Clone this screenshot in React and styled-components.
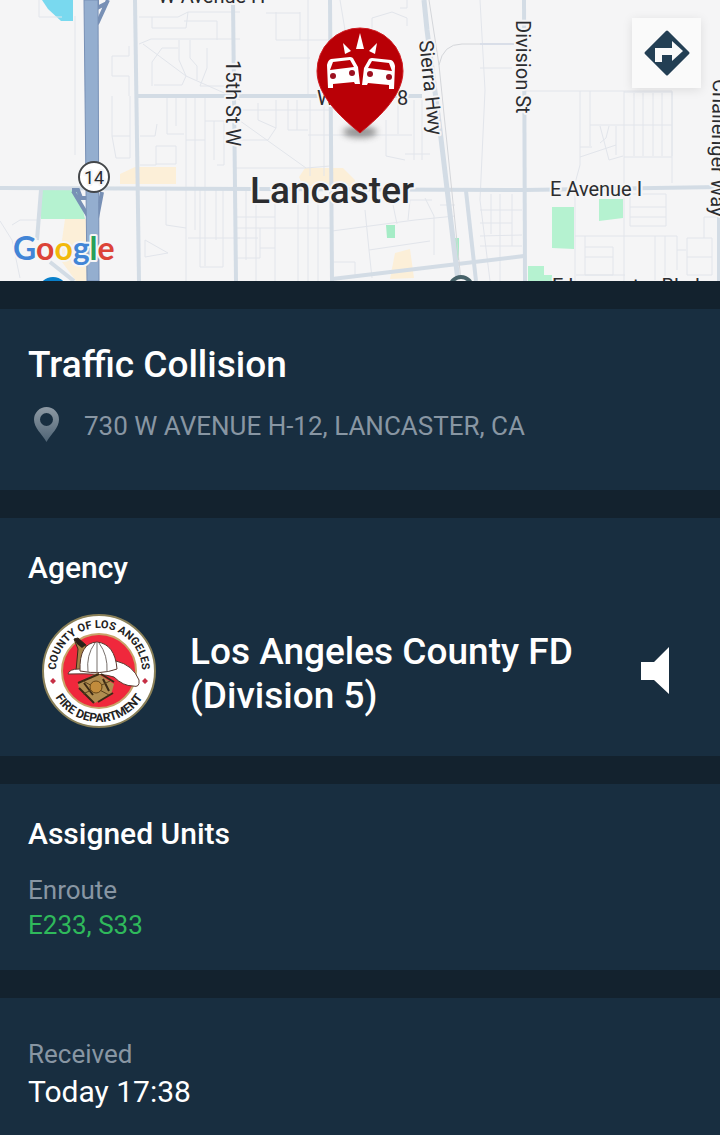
import React from 'react';
import styled, { createGlobalStyle } from 'styled-components';

const GlobalStyle = createGlobalStyle`
    body{
        margin: 0;
        background: #182e40;
        font-family: Roboto, "Liberation Sans", sans-serif;
    }
`
const Page = styled.main`
    display: flex;
    flex-direction: column;
    gap: 28px;
    background: #13222e;
    color: #fff;
`
const MapArea = styled.div`
    position: relative;
`
const MapSvg = styled.svg`
    display: block;
    width: 100%;
    height: auto;
    text{
        font-family: Roboto, "Liberation Sans", sans-serif;
        paint-order: stroke;
        stroke: #f5f5f6;
        stroke-width: 4px;
        stroke-linejoin: round;
        fill: #2b2c2f;
    }
`
const DirectionsButton = styled.button`
    position: absolute;
    top: 18px;
    right: 19px;
    display: flex;
    align-items: center;
    justify-content: center;
    width: 69px;
    height: 70px;
    padding: 0;
    border: 0;
    background: #fafafa;
    box-shadow: 0 2px 10px rgba(0, 0, 0, 0.1);
    cursor: pointer;
`
const Panel = styled.section`
    padding: ${(props) => props.$pad || '32px 28px 27px'};
    background: #182e40;
`
const Title = styled.h1`
    margin: 0 0 23px;
    font-size: 37px;
    font-weight: 500;
    line-height: 44px;
`
const Heading = styled.h2`
    margin: 0 0 ${(props) => props.$gap}px;
    font-size: 30px;
    font-weight: 500;
    line-height: 36px;
`
const Address = styled.div`
    display: flex;
    align-items: center;
    gap: 24px;
    height: 32px;
    padding-left: 5px;
    color: #8896a3;
    font-size: 26px;
    line-height: 32px;
    svg{
        flex: none;
        margin-bottom: 4px;
    }
`
const AgencyRow = styled.div`
    display: flex;
    align-items: center;
    padding: 0 22px 0 13px;
    svg{
        display: block;
        flex: none;
    }
`
const AgencyName = styled.div`
    flex: 1;
    padding: 5px 24px 0 33px;
    font-size: 37px;
    font-weight: 500;
    line-height: 44px;
`
const SoundButton = styled.button`
    padding: 0;
    border: 0;
    background: none;
    cursor: pointer;
`
const Label = styled.div`
    color: #8896a3;
    font-size: 26px;
    line-height: 35px;
`
const Units = styled.div`
    color: #2fb95b;
    font-size: 26px;
    line-height: 35px;
`
const Time = styled.div`
    font-size: 30px;
    line-height: 40px;
`

const minorRoads = [
    'M39 0V17H62M75 16V155M139 17H178L188 12H240M152 17V28H186L188 12M184 21H217V40',
    'M139 44L151 39H240M143 44L186 76L240 100M179 40V60L186 76M190 40V58L197 66V80M207 48V68L200 86H238',
    'M152 86V62L162 48H178M154 85H182L186 76M129 46V56H112V76H129V96',
    'M112 96V136L116 158H130V96M112 136H130M157 124L155 136H140M167 96V134H184M176 96V126M186 96V190',
    'M195 96V230M205 96V266M214 121V160M186 140H205M205 121H232M156 146V165H140M156 146H176V164H156M217 165H224V121',
    'M0 221L12 240L20 278M12 225L20 220H38M0 218M166 190V225L186 228M186 190V281M200 190V267H223V190M188 238H240M216 190V240',
    'M145 240L168 253L145 257M145 240V257',
    'M266 13H300M276 12V40H300M300 12V40H330M340 0L345 30M372 28V18L392 12L407 18V26M400 8H407V0M280 58H310',
    'M236 110H330M308 0V95M310 100V176M324 100V176M258 103V120L276 128V100M288 100V130H308M297 100V130',
    'M236 118L306 168M236 168H306L330 166V136M276 128L268 140H240M308 135H412M386 120V156L405 160M414 100V160M398 100V134M422 100V160M405 154H430',
    'M246 190V260M256 190V281M275 190V281M298 190V281M308 190V281M318 190V281M236 217H275M236 228H330M236 238L258 238M260 228V258H236M260 248H275',
    'M332 231L415 220L455 216M365 210L369 250L372 278M392 200L397 224M410 200L408 220M425 198L434 216V255M334 262H355V277M369 250L430 241M404 200H432M440 205H455',
    'M480 0L485 90L480 200L490 281M480 68H512M524 91H672M580 91V165L574 187M590 91V146M624 91V190M624 92H672V183',
    'M634 93V156M643 93V156M653 93V156M662 93V156M672 91V156M590 125H672M624 157H672M580 157L616 145M580 147H592M600 126L609 160L623 156M609 126L606 138L600 143M616 126V155',
    'M480 210H522M480 223H512M480 236L522 235M480 246H522M491 194V234M500 194V281M512 194V246M575 190V281M575 236H677V270M624 190V281',
    'M630 194H666V226H630ZM630 207H666M630 217H666M585 236V275H613V247H585M585 257H613M576 275H625M655 236V281M665 236V281M677 250H686M687 238H712V275H687ZM687 257H712M704 217V238M704 217H720',
];

const majorRoads = [
    'M135 0L139 281', 'M233 0L236 281', 'M330 0L332 281', 'M138 96H422', 'M0 188L524 190L720 187',
    'M524 0L525 281', 'M719 190V281', 'M332 279L524 256', 'M466 191L476 281',
];

const seal = {
    top: 'M15 58A43 43 0 0 1 101 58',
    bottom: 'M7 58A51 51 0 0 0 109 58',
};

const googleLetters = [
    ['G', '#4285d6'], ['o', '#dc4338'], ['o', '#f2b90c'], ['g', '#4285d6'], ['l', '#28a05a'], ['e', '#dc4338'],
];

function CityMap() {
    return (
        <MapSvg viewBox="0 0 720 281" role="img" aria-label="Map of Lancaster">
            <defs>
                <filter id="soft" x="-50%" y="-100%" width="200%" height="300%">
                    <feGaussianBlur stdDeviation="3" />
                </filter>
            </defs>
            <rect width="720" height="281" fill="#f5f5f6" />

            {/* parks, water and commercial areas */}
            <path d="M42 0H73V21H61L48 9Z" fill="#79d9ef" />
            <path d="M41 190H79L85 219H41Z" fill="#b5f2d0" />
            <path d="M552 207H574V249L552 248ZM599 199H623V218L599 221ZM528 266H544V275H552V281H528Z" fill="#b5f2d0" />
            <path d="M386 225H395V238H387ZM452 238H459V260H454Z" fill="#a5ecc6" />
            <path d="M120 174L135 167H176V184H120ZM65 219H87V281H76L62 262V240ZM299 177L305 168H343L355 180V186H303ZM395 253L410 249L414 278L390 279Z" fill="#fcefd8" />

            {minorRoads.map((d) => <path key={d} d={d} fill="none" stroke="#e2e5eb" strokeWidth="1" />)}
            {majorRoads.map((d) => <path key={d} d={d} fill="none" stroke="#d3dce5" strokeWidth="4" />)}
            <path d="M424 0L427 30L440 130L458 281" fill="none" stroke="#d3dce5" strokeWidth="5" />
            <path d="M429 0L439 65L461 281M439 65Q443 44 462 44H512" fill="none" stroke="#d4d6da" strokeWidth="1" />
            <path d="M480 44H514" stroke="#d9dee8" strokeWidth="2" />
            <path d="M41 190L37 240M50 262L74 281" fill="none" stroke="#d3dce5" strokeWidth="4" />

            {/* freeway */}
            <path d="M97 0V8L107 3M97 24L108 0M72 190H78L81 198H88M73 191L88 216M102 192L97 218" fill="none" stroke="#7890b5" strokeWidth="4" />
            <path d="M84 0H98L99 281H87Z" fill="#94aecf" stroke="#7890b5" strokeWidth="1" />
            <circle cx="94" cy="177" r="15" fill="#fff" stroke="#44474a" strokeWidth="2" />
            <text x="94" y="184" fontSize="18" textAnchor="middle">14</text>

            <circle cx="53" cy="292" r="15" fill="#087fca" />
            <circle cx="461" cy="288" r="11" fill="#f5f5f6" stroke="#476269" strokeWidth="4" />

            <text x="158" y="3" fontSize="20">W Avenue H</text>
            <text transform="translate(226 60) rotate(90)" fontSize="20">15th St W</text>
            <text transform="translate(419 41) rotate(84)" fontSize="20">Sierra Hwy</text>
            <text transform="translate(516 20) rotate(90)" fontSize="20">Division St</text>
            <text transform="translate(713 79) rotate(91)" fontSize="20">Challenger Way</text>
            <text x="550" y="196" fontSize="20">E Avenue I</text>
            <text x="552" y="293" fontSize="20">E Lancaster Blvd</text>
            <text x="317" y="105" fontSize="20">W</text>
            <text x="397" y="105" fontSize="20">8</text>
            <text x="250" y="203" fontSize="37" fontWeight="500">Lancaster</text>

            <text x="13" y="260" fontSize="32" style={{ fontFamily: 'Lato, sans-serif' }} fontWeight="700">
                {googleLetters.map(([letter, color], i) => <tspan key={i} fill={color}>{letter}</tspan>)}
            </text>

            {/* incident pin */}
            <ellipse cx="360" cy="132" rx="17" ry="6" fill="#555" opacity="0.6" filter="url(#soft)" />
            <path d="M360 133C346 121 317 98 317 71A43 43 0 0 1 403 71C403 98 374 121 360 133Z" fill="#b90006" stroke="#cf1a20" strokeWidth="1" />
            <path d="M360 33L364 49H356ZM343 43L351 51L345 54ZM377 43L375 54L369 51Z" fill="#fff" />
            <g id="car">
                <path fillRule="evenodd" fill="#fff" d="M331 59L350 57Q353 57 354 60L358 67L360 84H355L354 82L333 84V88H328L327 65Q328 60 331 59ZM333 62L330 70L354 67L350 60Z" />
                <circle cx="333" cy="76" r="3" fill="#9c1020" />
                <circle cx="352" cy="73" r="3" fill="#9c1020" />
            </g>
            <use href="#car" transform="translate(722 1) scale(-1 1)" />
        </MapSvg>
    );
}

function AgencySeal() {
    return (
        <svg width="116" height="116" viewBox="0 0 116 116" role="img" aria-label="County of Los Angeles Fire Department">
            <defs>
                <path id="sealTop" d={seal.top} />
                <path id="sealBottom" d={seal.bottom} />
            </defs>
            <circle cx="58" cy="58" r="56" fill="#fff" stroke="#8a8058" strokeWidth="2" />
            <circle cx="58" cy="58" r="37" fill="#f0283c" stroke="#c8a36a" strokeWidth="2" />
            <g fill="#222" fontFamily="Roboto, sans-serif" fontWeight="700" textAnchor="middle">
                <text fontSize="11"><textPath href="#sealTop" startOffset="50%">COUNTY OF LOS ANGELES</textPath></text>
                <text fontSize="12"><textPath href="#sealBottom" startOffset="50%">FIRE DEPARTMENT</textPath></text>
            </g>
            <path d="M12 65L15 68L12 71L9 68ZM104 65L107 68L104 71L101 68Z" fill="#c62f45" />
            {/* helmet */}
            <path d="M33 26L37 25L45 32L42 60L35 58L37 36Z" fill="#a58347" stroke="#3a2a18" strokeWidth="1" />
            <path d="M33 26L37 25L45 32L41 35L36 31Z" fill="#2a2018" />
            <path d="M27 61Q28 56 38 56L72 57L75 48Q92 52 98 67Q99 75 92 73Q82 73 73 64Q62 60 27 61Z" fill="#fff" stroke="#5b3a30" strokeWidth="1" />
            <path d="M39 58Q38 30 56 29Q74 31 76 56Q60 62 39 58Z" fill="#fff" stroke="#5b3a30" strokeWidth="1" />
            <path d="M47 59Q45 42 54 30M56 60V30M66 59Q67 42 58 30" fill="none" stroke="#77706c" strokeWidth="1" />
            {/* badge */}
            <path d="M56 60L73 71L70 82L54 90L38 76L37 70Z" fill="#b08d50" />
            <path d="M37 70L58 61M60 61L73 69M38 75L53 90M57 89L72 80M43 70L52 82M62 66L68 78" fill="none" stroke="#3c2a15" strokeWidth="2" />
            <path d="M42 68L68 82M69 68L42 81" stroke="#5a411d" strokeWidth="1" />
            <circle cx="55" cy="74" r="6" fill="#c28c3c" stroke="#654516" strokeWidth="1" />
        </svg>
    );
}

export default class App extends React.Component {
    render() {
        return <>
            <GlobalStyle />
            <Page>
                <MapArea>
                    <CityMap />
                    <DirectionsButton aria-label="Directions">
                        <svg width="48" height="48" viewBox="0 0 48 48">
                            <path d="M24 3L45 24L24 45L3 24Z" fill="#233f54" stroke="#233f54" strokeWidth="3" strokeLinejoin="round" />
                            <path d="M12 33V19H29V12L40 22L29 32V26H19V33Z" fill="#fafafa" />
                        </svg>
                    </DirectionsButton>
                </MapArea>
                <Panel $pad="34px 28px 48px">
                    <Title>Traffic Collision</Title>
                    <Address>
                        <svg width="27" height="37" viewBox="0 0 27 37" aria-hidden="true">
                            <defs>
                                <linearGradient id="pinFill" x1="0" y1="0" x2="0" y2="1">
                                    <stop offset="0" stopColor="#8e9aa4" />
                                    <stop offset="1" stopColor="#4f6475" />
                                </linearGradient>
                            </defs>
                            <path fillRule="evenodd" d="M13.500 1A12.500 12.500 0 0 0 1 13.500C1 22 9 28 13.500 36C18 28 26 22 26 13.500A12.500 12.500 0 0 0 13.500 1ZM13.500 7A6.500 6.500 0 1 1 13.500 20A6.500 6.500 0 1 1 13.500 7Z" fill="url(#pinFill)" />
                        </svg>
                        <span>730 W AVENUE H-12, LANCASTER, CA</span>
                    </Address>
                </Panel>
                <Panel>
                    <Heading $gap={27}>Agency</Heading>
                    <AgencyRow>
                        <AgencySeal />
                        <AgencyName>Los Angeles County FD (Division 5)</AgencyName>
                        <SoundButton aria-label="Listen">
                            <svg width="30" height="50" viewBox="0 0 30 50">
                                <path d="M1 16H14L29 1V48L14 34H1Z" fill="#fff" />
                            </svg>
                        </SoundButton>
                    </AgencyRow>
                </Panel>
                <Panel>
                    <Heading $gap={21}>Assigned Units</Heading>
                    <Label>Enroute</Label>
                    <Units>E233, S33</Units>
                </Panel>
                <Panel $pad="39px 28px 24px">
                    <Label>Received</Label>
                    <Time>Today 17:38</Time>
                </Panel>
            </Page>
        </>
    }
}
